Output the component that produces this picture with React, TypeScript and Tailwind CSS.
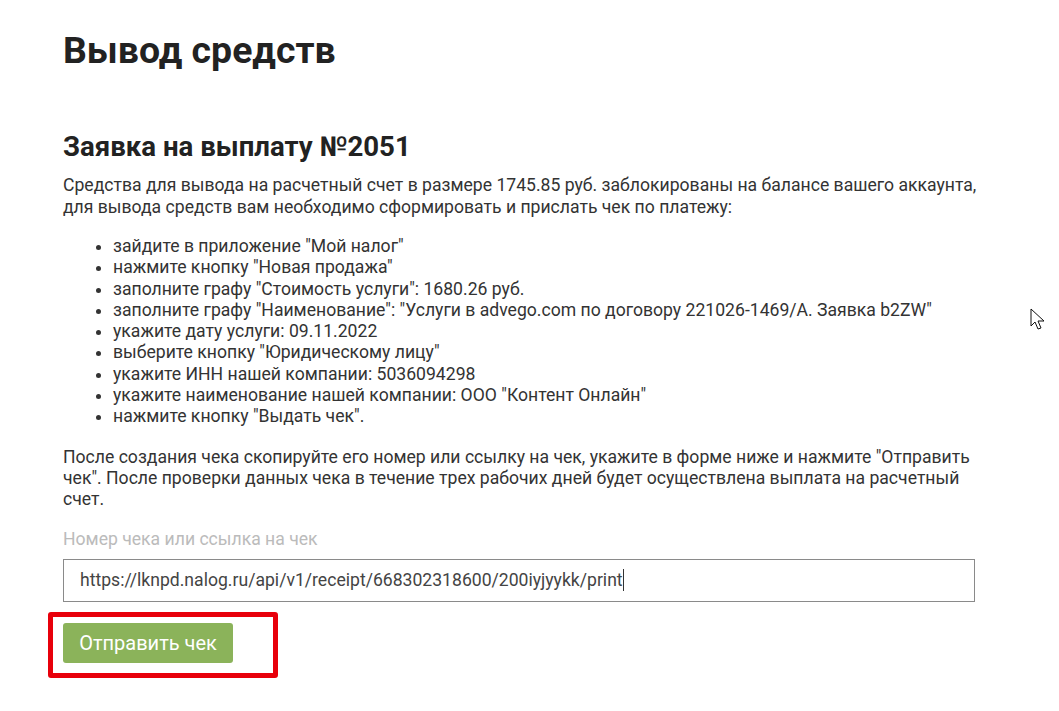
import React from 'react';

const steps = [
  'зайдите в приложение "Мой налог"',
  'нажмите кнопку "Новая продажа"',
  'заполните графу "Стоимость услуги": 1680.26 руб.',
  'заполните графу "Наименование": "Услуги в advego.com по договору 221026-1469/A. Заявка b2ZW"',
  'укажите дату услуги: 09.11.2022',
  'выберите кнопку "Юридическому лицу"',
  'укажите ИНН нашей компании: 5036094298',
  'укажите наименование нашей компании: ООО "Контент Онлайн"',
  'нажмите кнопку "Выдать чек".',
];

export default function App() {
  return (
    <div className="min-h-[711px] bg-white font-['Roboto',sans-serif] text-[#222] relative">
      <div className="pl-[63px] pt-[26px] w-[990px]">
        <h1 className="text-[37.4px] font-bold leading-[48px] text-[#222]">Вывод средств</h1>

        <h2 className="mt-[56px] text-[27.6px] font-bold leading-[34px] text-[#222]">
          Заявка на выплату №2051
        </h2>

        <p className="mt-[10px] text-[17.6px] leading-[22px] text-[#333] w-[925px]">
          Средства для вывода на расчетный счет в размере 1745.85 руб. заблокированы на балансе вашего аккаунта,
          для вывода средств вам необходимо сформировать и прислать чек по платежу:
        </p>

        <ul className="mt-[18px] pl-[50px] list-disc text-[17.6px] leading-[21.3px] text-[#333]">
          {steps.map((s) => (
            <li key={s}>{s}</li>
          ))}
        </ul>

        <p className="mt-[19px] text-[17.6px] leading-[21.3px] text-[#333] w-[912px]">
          После создания чека скопируйте его номер или ссылку на чек, укажите в форме ниже и нажмите "Отправить
          чек". После проверки данных чека в течение трех рабочих дней будет осуществлена выплата на расчетный
          счет.
        </p>

        <div className="mt-[17px] text-[17.6px] leading-[22px] text-[#bbb]">Номер чека или ссылка на чек</div>

        <div className="mt-[9px] w-[912px] h-[43px] border border-[#8a8a8a] flex items-center px-[16px] text-[17.6px] text-[#444]">
          https://lknpd.nalog.ru/api/v1/receipt/668302318600/200iyjyykk/print
          <span className="inline-block w-px h-[22px] bg-[#333]" />
        </div>

        <div className="mt-[10px] -ml-[15px] w-[230px] h-[66px] border-[5px] border-[#e8000b] rounded-[3px] pl-[10px] pt-[6px]">
          <button className="h-[40px] w-[170px] bg-[#8bb35a] rounded-[3px] text-white text-[20px]">
            Отправить чек
          </button>
        </div>
      </div>

      {/* mouse pointer */}
      <svg className="absolute left-[1030px] top-[308px]" width="16" height="24" viewBox="0 0 16 24">
        <path d="M1 1 L1 18 L5 14 L8 21 L11 20 L8 13 L14 13 Z" fill="white" stroke="#111" strokeWidth="1" />
      </svg>
    </div>
  );
}
